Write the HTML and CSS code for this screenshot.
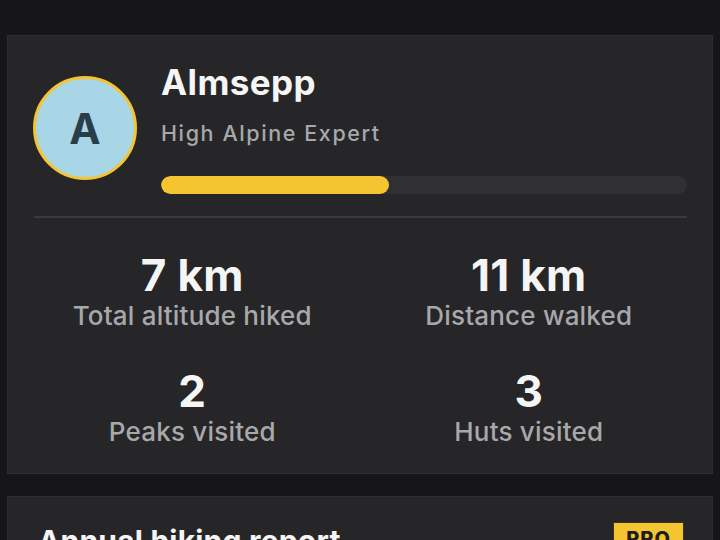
FILE: index.html
```html
<!DOCTYPE html>
<html lang="en">
<head>
  <meta charset="UTF-8">
  <title>Profile</title>
  <link rel="stylesheet" href="styles.css">
</head>
<body>
  <div class="card profile-card">
    <div class="profile">
      <div class="avatar">A</div>
      <div class="profile-info">
        <h1 class="name">Almsepp</h1>
        <div class="rank">High Alpine Expert</div>
        <div class="progress">
          <div class="progress-fill" style="width: 43.4%;"></div>
        </div>
      </div>
    </div>
    <div class="divider"></div>
    <div class="stats">
      <div class="stat">
        <div class="stat-value">7 km</div>
        <div class="stat-label">Total altitude hiked</div>
      </div>
      <div class="stat">
        <div class="stat-value">11 km</div>
        <div class="stat-label">Distance walked</div>
      </div>
      <div class="stat">
        <div class="stat-value">2</div>
        <div class="stat-label">Peaks visited</div>
      </div>
      <div class="stat">
        <div class="stat-value">3</div>
        <div class="stat-label">Huts visited</div>
      </div>
    </div>
  </div>

  <div class="card report-card">
    <div class="report-head">
      <h2 class="report-title">Annual hiking report</h2>
      <span class="pro-badge">PRO</span>
    </div>
  </div>
</body>
</html>
```

FILE: styles.css
```css
:root {
  --bg: #161618;
  --card: #262628;
  --card-border: #2e2e30;
  --text: #f5f5f5;
  --muted: #a8a8ab;
  --yellow: #f4c431;
  --track: #303034;
}

body {
  margin: 0;
  padding: 35px 7px 0;
  background: var(--bg);
  color: var(--text);
  font-family: Inter, "Noto Sans", sans-serif;
}

.card {
  background: var(--card);
  border: 1px solid var(--card-border);
}

.profile-card {
  padding: 26px 25px 25px 26px;
}

.profile {
  display: flex;
  align-items: center;
  gap: 24px;
}

.avatar {
  flex: none;
  width: 98px;
  height: 98px;
  border: 3px solid var(--yellow);
  border-radius: 50%;
  background: #a9d6e6;
  color: #2b3d4a;
  font-size: 42px;
  font-weight: 700;
  display: flex;
  align-items: center;
  justify-content: center;
  margin-left: -1px;
}

.profile-info {
  flex: 1;
}

.name {
  margin: 0;
  font-size: 35px;
  line-height: 40px;
  font-weight: 700;
  letter-spacing: 0.4px;
}

.rank {
  margin-top: 17px;
  font-size: 21.5px;
  line-height: 28px;
  font-weight: 500;
  letter-spacing: 1.6px;
  color: var(--muted);
}

.progress {
  margin-top: 29px;
  height: 18px;
  border-radius: 9px;
  background: var(--track);
  overflow: hidden;
}

.progress-fill {
  height: 100%;
  border-radius: 9px;
  background: var(--yellow);
}

.divider {
  height: 2px;
  margin-top: 22px;
  background: #3a3a3c;
}

.stats {
  display: grid;
  grid-template-columns: 1fr 1fr;
  column-gap: 20px;
  row-gap: 35px;
  margin-top: 33px;
  text-align: center;
}

.stat-value {
  font-size: 44px;
  line-height: 48px;
  font-weight: 700;
  letter-spacing: 0.3px;
}

.stat-label {
  margin-top: 1px;
  font-size: 26px;
  line-height: 32px;
  font-weight: 500;
  letter-spacing: 0.2px;
  color: var(--muted);
}

.report-card {
  margin-top: 22px;
  padding: 26px 28px 30px 30px;
}

.report-head {
  display: flex;
  justify-content: space-between;
  align-items: flex-start;
}

.report-title {
  margin: 0;
  font-size: 30px;
  line-height: 36px;
  font-weight: 700;
  letter-spacing: 0.2px;
}

.pro-badge {
  margin-top: -1px;
  padding: 4px 12px;
  background: var(--yellow);
  border: 1px solid #3a3220;
  color: #1d1d1f;
  font-size: 20px;
  font-weight: 800;
  letter-spacing: 1px;
}
```
